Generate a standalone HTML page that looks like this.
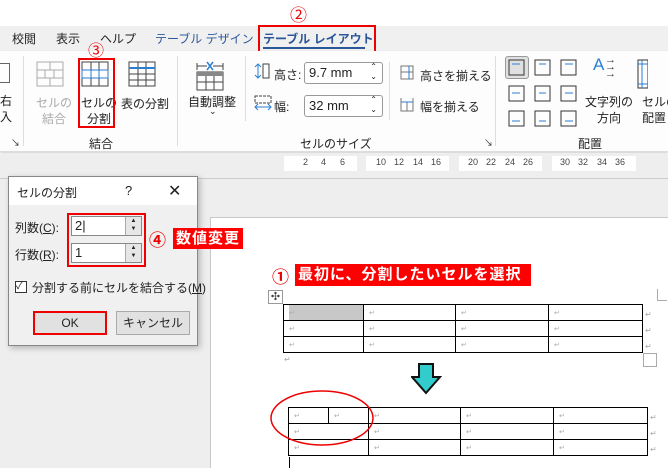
<!DOCTYPE html>
<html><head><meta charset="utf-8"><style>
*{margin:0;padding:0;box-sizing:border-box}
body{width:668px;height:468px;overflow:hidden;position:relative;background:#fff;font-family:"Liberation Sans","Noto Sans CJK JP",sans-serif;font-size:12px;color:#222}
.a{position:absolute;white-space:nowrap}
.rm{color:#aaa;font-size:8px}
.red{color:#e00}
.lbl{background:#f00;color:#fff;font-weight:bold;font-size:15px;line-height:22px;padding:0 3px;letter-spacing:1px}
table{border-collapse:collapse;position:absolute}
td{border:1px solid #000;height:16px;padding:0 0 0 5px;font-size:7px;color:#aaa;vertical-align:middle}
.rn{position:absolute;top:157px;font-size:9px;color:#444}
</style></head><body>
<div class="a" style="left:0;top:26px;width:668px;height:25px;background:#f0f0f0"></div>
<div class="a" style="left:12px;top:30px;font-size:12px">校閲</div>
<div class="a" style="left:56px;top:30px">表示</div>
<div class="a" style="left:100px;top:30px">ヘルプ</div>
<div class="a" style="left:155px;top:30px;color:#2b579a">テーブル デザイン</div>
<div class="a" style="left:263px;top:30px;color:#2b579a;font-weight:bold">テーブル レイアウト</div>
<div class="a" style="left:263px;top:47px;width:102px;height:2px;background:#2b579a"></div>
<div class="a" style="left:258px;top:25px;width:118px;height:28px;border:2px solid #e00"></div>
<div class="a red" style="left:290px;top:1px;font-size:17px">②</div>
<div class="a" style="left:0;top:51px;width:668px;height:101px;background:#fdfdfd;border-bottom:1px solid #ddd;box-shadow:0 1px 2px #ccc"></div>
<div class="a" style="left:0;top:93px;font-size:12px;line-height:16px">右<br>入</div>
<div class="a" style="left:0;top:63px;width:10px;height:20px;border:1px solid #666;border-left:none"></div>
<div class="a" style="left:11px;top:136px;font-size:9px">↘</div>
<div class="a" style="left:23px;top:56px;width:1px;height:90px;background:#ddd"></div>
<svg class="a" style="left:36px;top:61px" width="30" height="28"><rect x="1" y="1" width="26" height="24" fill="none" stroke="#aaa"/><path d="M1 9H27M1 17H27M14 1V9M9 9V17M18 9V17M14 17V25" stroke="#aaa"/></svg>
<div class="a" style="left:36px;top:95px;color:#aaa;line-height:16px;text-align:center">セルの<br>結合</div>
<svg class="a" style="left:81px;top:61px" width="30" height="28"><rect x="1" y="1" width="26" height="24" fill="none" stroke="#444"/><path d="M1 17H27M10 1V25M18 1V25" stroke="#444"/><rect x="1" y="9" width="26" height="8" fill="none" stroke="#2a7fd4"/><path d="M10 9V17M18 9V17" stroke="#2a7fd4"/></svg>
<div class="a" style="left:81px;top:95px;line-height:16px;text-align:center">セルの<br>分割</div>
<div class="a" style="left:78px;top:58px;width:37px;height:70px;border:2px solid #e00"></div>
<div class="a red" style="left:88px;top:37px;font-size:16px">③</div>
<svg class="a" style="left:128px;top:61px" width="30" height="28"><rect x="1" y="1" width="26" height="24" fill="none" stroke="#444"/><path d="M1 13H27M1 19H27M10 1V25M18 1V25" stroke="#444"/><path d="M1 7H27" stroke="#2a7fd4" stroke-width="2"/></svg>
<div class="a" style="left:121px;top:95px">表の分割</div>
<div class="a" style="left:89px;top:135px">結合</div>
<div class="a" style="left:177px;top:56px;width:1px;height:90px;background:#ddd"></div>
<svg class="a" style="left:195px;top:60px" width="32" height="32"><path d="M2 3V10M2 6H12M18 6H28M28 3V10" stroke="#444"/><path d="M12 2L18 10M18 2L12 10" stroke="#2a7fd4" stroke-width="1.5"/><rect x="2" y="12" width="26" height="18" fill="none" stroke="#444"/><rect x="2" y="12" width="26" height="4" fill="#888"/><path d="M2 22H28M11 16V30M19 16V30" stroke="#444"/></svg>
<div class="a" style="left:188px;top:93px">自動調整</div>
<div class="a" style="left:209px;top:106px;font-size:9px">⌄</div>
<div class="a" style="left:245px;top:56px;width:1px;height:65px;background:#ddd"></div>
<svg class="a" style="left:254px;top:62px" width="20" height="20"><path d="M4 2V16M1 5L4 2L7 5M1 13L4 16L7 13" stroke="#2a7fd4" fill="none"/><rect x="9" y="2" width="6" height="14" fill="none" stroke="#444"/></svg>
<div class="a" style="left:274px;top:66px">高さ:</div>
<div class="a" style="left:304px;top:62px;width:79px;height:22px;border:1px solid #999;border-radius:3px;background:#fff;padding:2px 4px;font-size:13px">9.7 mm<span style="position:absolute;right:5px;top:-1px;font-size:8px;line-height:10px">⌃<br>⌄</span></div>
<svg class="a" style="left:254px;top:94px" width="20" height="20"><rect x="1" y="2" width="16" height="7" fill="none" stroke="#444" stroke-dasharray="3 1"/><path d="M1 13H17M4 10L1 13L4 16M14 10L17 13L14 16" stroke="#2a7fd4" fill="none"/></svg>
<div class="a" style="left:274px;top:98px">幅:</div>
<div class="a" style="left:304px;top:95px;width:79px;height:22px;border:1px solid #999;border-radius:3px;background:#fff;padding:2px 4px;font-size:13px">32 mm<span style="position:absolute;right:5px;top:-1px;font-size:8px;line-height:10px">⌃<br>⌄</span></div>
<div class="a" style="left:389px;top:62px;width:1px;height:58px;background:#ddd"></div>
<svg class="a" style="left:400px;top:65px" width="16" height="16"><rect x="1" y="1" width="12" height="13" fill="none" stroke="#777"/><path d="M1 7H13" stroke="#777"/><path d="M9 1V14" stroke="#2a7fd4"/></svg>
<div class="a" style="left:420px;top:67px;font-size:12px">高さを揃える</div>
<svg class="a" style="left:400px;top:97px" width="16" height="16"><path d="M1 1V14H13V1M7 5V14" stroke="#777" fill="none"/><path d="M1 5H13" stroke="#2a7fd4"/></svg>
<div class="a" style="left:420px;top:98px;font-size:12px">幅を揃える</div>
<div class="a" style="left:300px;top:135px">セルのサイズ</div>
<div class="a" style="left:484px;top:136px;font-size:9px">↘</div>
<div class="a" style="left:495px;top:56px;width:1px;height:90px;background:#ddd"></div>
<div class="a" style="left:505px;top:56px;width:24px;height:23px;border:1px solid #999;border-radius:3px;background:#e0e0e0"></div>
<svg class="a" style="left:508px;top:59px" width="140" height="70">
<g fill="none" stroke="#333"><rect x="1" y="1" width="15" height="15"/><rect x="27" y="1" width="15" height="15"/><rect x="53" y="1" width="15" height="15"/><rect x="1" y="27" width="15" height="15"/><rect x="27" y="27" width="15" height="15"/><rect x="53" y="27" width="15" height="15"/><rect x="1" y="52" width="15" height="15"/><rect x="27" y="52" width="15" height="15"/><rect x="53" y="52" width="15" height="15"/></g>
<g stroke="#2a7fd4"><path d="M4 5H12M31 5H38M57 5H65M4 34H12M31 34H38M57 34H65M4 62H12M31 62H38M57 62H65"/></g>
<rect x="130" y="1" width="10" height="28" fill="none" stroke="#333"/><path d="M130 5H140M130 25H140M134 1V29" stroke="#2a7fd4"/></svg>
<div class="a" style="left:593px;top:55px;color:#2a7fd4;font-size:17px">A</div>
<div class="a" style="left:605px;top:57px;font-size:11px;line-height:7px;color:#333">→<br>→<br>→</div>
<div class="a" style="left:585px;top:94px;line-height:16px;text-align:center">文字列の<br>方向</div>
<div class="a" style="left:642px;top:94px;line-height:16px">セルの<br>配置</div>
<div class="a" style="left:578px;top:135px">配置</div>
<div class="a" style="left:0;top:153px;width:668px;height:315px;background:#eeeeee"></div>
<div class="a" style="left:284px;top:156px;width:73px;height:15px;background:#fff"></div>
<div class="a" style="left:366px;top:156px;width:83px;height:15px;background:#fff"></div>
<div class="a" style="left:459px;top:156px;width:83px;height:15px;background:#fff"></div>
<div class="a" style="left:552px;top:156px;width:84px;height:15px;background:#fff"></div>
<span class="rn" style="left:303px">2</span><span class="rn" style="left:321px">4</span><span class="rn" style="left:340px">6</span>
<span class="rn" style="left:376px">10</span><span class="rn" style="left:394px">12</span><span class="rn" style="left:413px">14</span><span class="rn" style="left:431px">16</span>
<span class="rn" style="left:468px">20</span><span class="rn" style="left:486px">22</span><span class="rn" style="left:505px">24</span><span class="rn" style="left:523px">26</span>
<span class="rn" style="left:560px">30</span><span class="rn" style="left:578px">32</span><span class="rn" style="left:597px">34</span><span class="rn" style="left:615px">36</span>
<div class="a" style="left:0;top:178px;width:668px;height:1px;background:#ccc"></div>
<div class="a" style="left:210px;top:217px;width:458px;height:251px;background:#fff;border-left:1px solid #c8c8c8;border-top:1px solid #c8c8c8"></div>
<div class="a" style="left:8px;top:176px;width:190px;height:170px;background:#f0f0f0;border:1px solid #888;box-shadow:2px 2px 6px rgba(0,0,0,.25)"></div>
<div class="a" style="left:9px;top:177px;width:188px;height:28px;background:#fff"></div>
<div class="a" style="left:17px;top:184px">セルの分割</div>
<div class="a" style="left:125px;top:183px;font-size:13px">?</div>
<div class="a" style="left:168px;top:181px;font-size:16px">✕</div>
<div class="a" style="left:15px;top:219px">列数(<u>C</u>):</div>
<div class="a" style="left:15px;top:246px">行数(<u>R</u>):</div>
<div class="a" style="left:71px;top:216px;width:71px;height:20px;background:#fff;border:1px solid #888;padding:1px 3px;font-size:13px">2|</div>
<div class="a" style="left:71px;top:243px;width:71px;height:20px;background:#fff;border:1px solid #888;padding:1px 3px;font-size:13px">1</div>
<div class="a" style="left:125px;top:217px;width:16px;height:18px;background:#e6e6e6;border-left:1px solid #aaa;font-size:6px;line-height:8px;text-align:center">▲<br>▼</div>
<div class="a" style="left:125px;top:244px;width:16px;height:18px;background:#e6e6e6;border-left:1px solid #aaa;font-size:6px;line-height:8px;text-align:center">▲<br>▼</div>
<div class="a" style="left:67px;top:213px;width:79px;height:54px;border:2px solid #e00"></div>
<div class="a red" style="left:149px;top:226px;font-size:17px;font-weight:bold">④</div>
<div class="a lbl" style="left:173px;top:228px;height:21px;line-height:21px">数値変更</div>
<div class="a" style="left:15px;top:281px;width:12px;height:12px;border:1px solid #333;background:#fff;font-size:10px;line-height:10px">✓</div>
<div class="a" style="left:32px;top:279px;font-size:12px">分割する前にセルを結合する(<u>M</u>)</div>
<div class="a" style="left:33px;top:311px;width:74px;height:24px;background:#e1e1e1;border:2px solid #e00;text-align:center;line-height:20px">OK</div>
<div class="a" style="left:116px;top:311px;width:74px;height:24px;background:#e1e1e1;border:1px solid #aaa;text-align:center;line-height:22px">キャンセル</div>
<div class="a red" style="left:272px;top:263px;font-size:17px;font-weight:bold">①</div>
<div class="a lbl" style="left:295px;top:264px;width:236px">最初に、分割したいセルを選択</div>
<div class="a" style="left:268px;top:290px;width:15px;height:14px;border:1px solid #999;font-size:11px;line-height:12px;text-align:center;color:#444">✣</div>
<div class="a" style="left:657px;top:289px;width:10px;height:12px;border-left:1px solid #aaa;border-bottom:1px solid #aaa"></div>
<table style="left:283px;top:304px;width:360px">
<tr><td style="width:80px;background:#c8c8c8;box-shadow:inset 5px 0 #fff">↵</td><td style="width:92px">↵</td><td style="width:93px">↵</td><td>↵</td></tr>
<tr><td>↵</td><td>↵</td><td>↵</td><td>↵</td></tr>
<tr><td>↵</td><td>↵</td><td>↵</td><td>↵</td></tr>
</table>
<div class="a rm" style="left:645px;top:307px;line-height:16px">↵<br>↵<br>↵</div>
<div class="a rm" style="left:284px;top:355px">↵</div>
<div class="a" style="left:643px;top:353px;width:14px;height:14px;border:1px solid #aaa"></div>
<svg class="a" style="left:411px;top:363px" width="31" height="32"><path d="M8 1H22V14H29L15 30L1 14H8Z" fill="#33cccc" stroke="#111" stroke-width="2"/></svg>
<table style="left:288px;top:407px;width:360px">
<tr><td style="width:40px">↵</td><td style="width:40px">↵</td><td style="width:92px">↵</td><td style="width:93px">↵</td><td>↵</td></tr>
<tr><td colspan="2">↵</td><td>↵</td><td>↵</td><td>↵</td></tr>
<tr><td colspan="2">↵</td><td>↵</td><td>↵</td><td>↵</td></tr>
</table>
<div class="a rm" style="left:650px;top:410px;line-height:16px">↵<br>↵<br>↵</div>
<div class="a" style="left:289px;top:457px;width:1px;height:11px;background:#000"></div>
<svg class="a" style="left:270px;top:388px" width="110" height="60"><ellipse cx="52" cy="30" rx="51" ry="27" fill="none" stroke="#e00" stroke-width="1.5"/></svg>
</body></html>
